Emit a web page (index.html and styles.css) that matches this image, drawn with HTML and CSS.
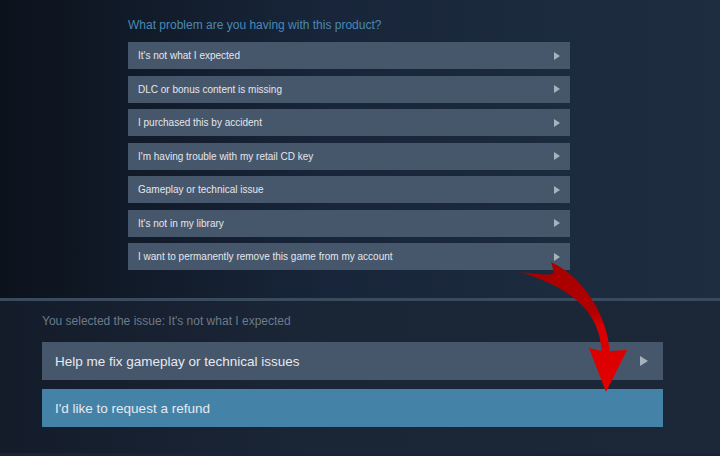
FILE: index.html
```html
<!DOCTYPE html>
<html>
<head>
<meta charset="utf-8">
<link rel="stylesheet" href="styles.css">
</head>
<body>
<div class="page">
  <section class="problems">
    <h2 class="question">What problem are you having with this product?</h2>
    <div class="rows">
      <div class="row"><span>It's not what I expected</span><i class="tri"></i></div>
      <div class="row"><span>DLC or bonus content is missing</span><i class="tri"></i></div>
      <div class="row"><span>I purchased this by accident</span><i class="tri"></i></div>
      <div class="row"><span>I'm having trouble with my retail CD key</span><i class="tri"></i></div>
      <div class="row"><span>Gameplay or technical issue</span><i class="tri"></i></div>
      <div class="row"><span>It's not in my library</span><i class="tri"></i></div>
      <div class="row"><span>I want to permanently remove this game from my account</span><i class="tri"></i></div>
    </div>
  </section>
  <section class="selected">
    <p class="issue">You selected the issue: It's not what I expected</p>
    <div class="btn"><span>Help me fix gameplay or technical issues</span><i class="tri big"></i></div>
    <div class="btn refund"><span>I'd like to request a refund</span></div>
  </section>
  <svg class="arrow" width="720" height="456" viewBox="0 0 720 456">
    <defs>
      <linearGradient id="rg" x1="0" y1="262" x2="0" y2="392" gradientUnits="userSpaceOnUse">
        <stop offset="0" stop-color="#a80000"/>
        <stop offset="0.38" stop-color="#b00000"/>
        <stop offset="0.5" stop-color="#d80000"/>
        <stop offset="1" stop-color="#e20000"/>
      </linearGradient>
    </defs>
    <path fill="url(#rg)" d="M520,272 C535,274 550,276 554,273 C553,269 552,265 551,262 C585,278 608,318 609.5,351 L627,350 L606,392 L589,348 L601.5,351 C600,318 580,290 520,272 Z"/>
  </svg>
</div>
</body>
</html>
```
FILE: styles.css
```css
html, body {
  margin: 0;
  padding: 0;
}
body {
  width: 720px;
  height: 456px;
  overflow: hidden;
  font-family: "Liberation Sans", Arial, sans-serif;
  background: #1a2435;
}
.page {
  position: relative;
  width: 720px;
  height: 456px;
}
.problems {
  height: 298px;
  box-sizing: border-box;
  padding: 18px 0 0 128px;
  background:
    linear-gradient(90deg, #0c121c 0%, #111a28 18%, #18253a 45%, #1c2a3d 75%, #1f2d40 100%);
}
.question {
  margin: 0 0 10px 0;
  font-size: 12px;
  line-height: 14px;
  font-weight: normal;
  color: #4a89b4;
}
.rows {
  display: flex;
  flex-direction: column;
  gap: 6.5px;
  width: 442px;
}
.row {
  height: 27px;
  box-sizing: border-box;
  display: flex;
  align-items: center;
  justify-content: space-between;
  padding: 0 10px 0 10px;
  background: #46566b;
  color: #e3e7eb;
  font-size: 10px;
}
.tri {
  width: 0;
  height: 0;
  border-top: 4px solid transparent;
  border-bottom: 4px solid transparent;
  border-left: 6px solid #a7b2bf;
}
.tri.big {
  border-top-width: 5.5px;
  border-bottom-width: 5.5px;
  border-left-width: 8px;
}
.selected {
  border-top: 3px solid #3a4b5f;
  height: 155px;
  box-sizing: border-box;
  padding: 13px 57px 0 42px;
  background: linear-gradient(90deg, #141c2a 0%, #1a2536 40%, #1c2838 100%);
}
.issue {
  margin: 0 0 14px 0;
  font-size: 12px;
  line-height: 14px;
  color: #6c7b8b;
}
.btn {
  height: 38px;
  box-sizing: border-box;
  display: flex;
  align-items: center;
  justify-content: space-between;
  padding: 0 15px 0 13px;
  background: #46566b;
  color: #e6eaee;
  font-size: 13.5px;
  margin-bottom: 9px;
}
.btn.refund {
  background: #4582a8;
}
.arrow {
  position: absolute;
  left: 0;
  top: 0;
  pointer-events: none;
}
```
